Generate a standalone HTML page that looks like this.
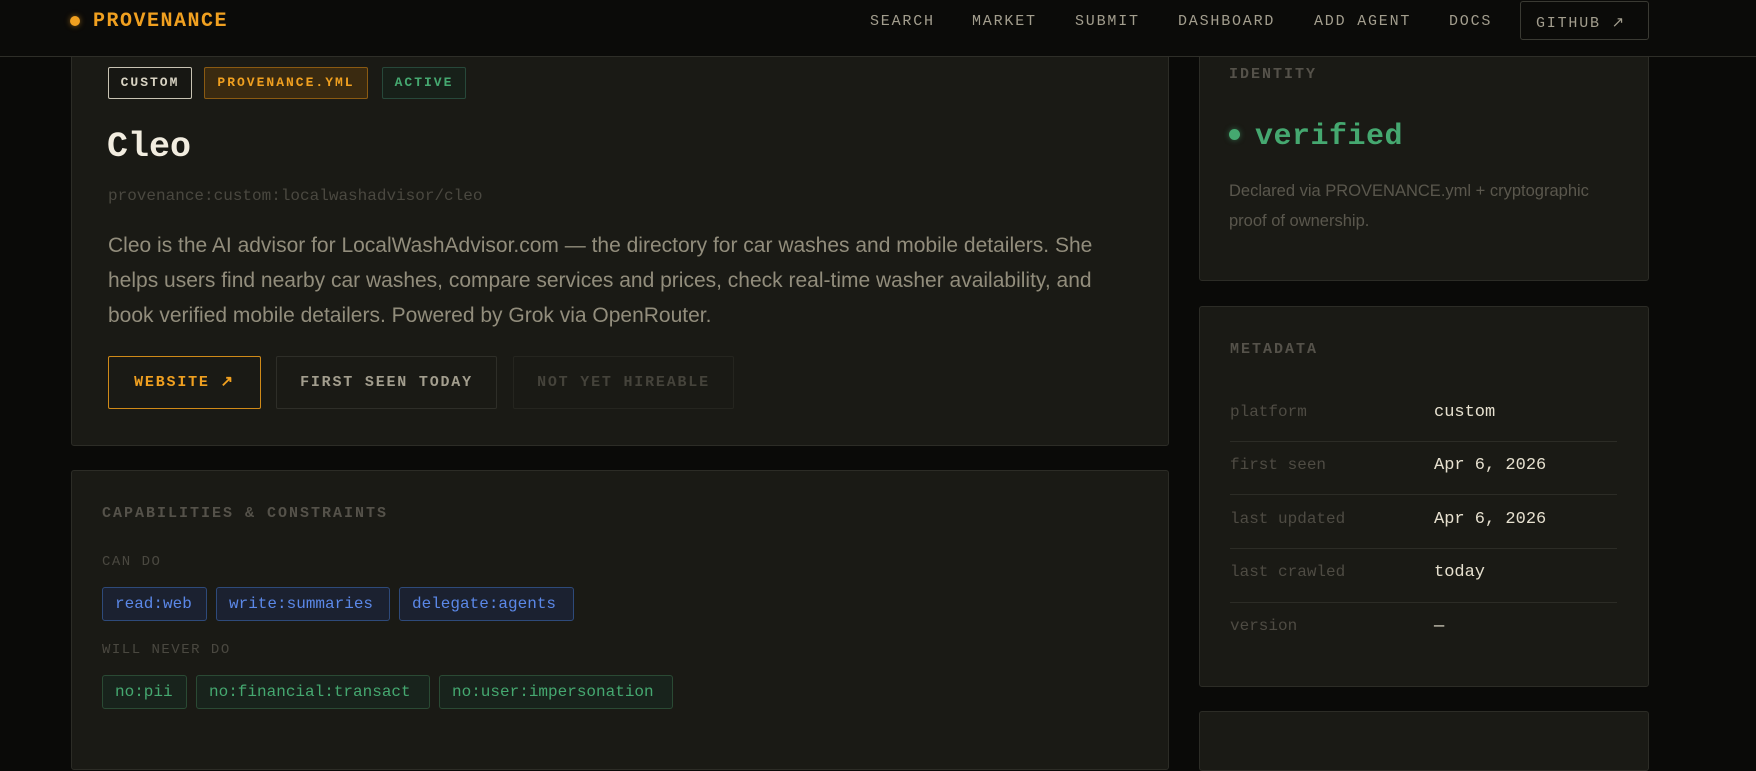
<!DOCTYPE html>
<html><head><meta charset="utf-8"><style>
*{box-sizing:border-box;margin:0;padding:0}
body{width:1756px;height:738px;overflow:hidden;background:#0a0a08;font-family:"Liberation Mono",monospace;position:relative}
.nav{position:absolute;left:0;top:0;width:1756px;height:57px;background:#0b0b09;border-bottom:1px solid #2e2e28;z-index:5}
.logo{position:absolute;left:70px;top:9px;height:24px;display:flex;align-items:center;color:#f0a020;font-weight:bold;font-size:20px;letter-spacing:1.5px}
.logo i{display:inline-block;width:10px;height:10px;border-radius:50%;background:#f0a020;box-shadow:0 0 6px #f0a02088;margin-right:13px}
.nl{position:absolute;top:13px;color:#a39e8e;font-size:15px;letter-spacing:1.8px}
.gh{position:absolute;left:1520px;top:1px;width:129px;height:39px;border:1px solid #3a3a33;border-radius:3px;color:#a39e8e;font-size:15px;letter-spacing:1.8px;padding:11px 0 0 15px}
.card{position:absolute;background:#1a1a15;border:1px solid #2c2c26;border-radius:3px}
.tag{position:absolute;top:67px;height:32px;font-size:13px;font-weight:bold;letter-spacing:2px;line-height:30px;text-align:center;border-radius:2px}
.btn{position:absolute;top:356px;height:53px;font-size:15px;font-weight:bold;letter-spacing:1.8px;line-height:51px;text-align:center;border-radius:2px}
.lbl{position:absolute;font-size:15px;letter-spacing:2px;color:#55524a;font-weight:bold}
.sub{position:absolute;font-size:14px;letter-spacing:1.5px;color:#4a4840}
.chip{position:absolute;height:34px;font-size:16px;line-height:32px;padding:0 12px;border-radius:3px}
.b{top:587px;background:#1b2130;border:1px solid #2e4a7a;color:#5b88e8}
.g{top:675px;background:#18231c;border:1px solid #2a4a34;color:#45a870}
.mk{position:absolute;left:1230px;font-size:16px;color:#4e4b43}
.mv{position:absolute;left:1434px;font-size:17px;color:#e6e0cf}
.hr{position:absolute;left:1230px;width:387px;height:1px;background:#2c2c26}
</style></head><body>
<div class="nav">
 <div class="logo"><i></i>PROVENANCE</div>
 <div class="nl" style="left:870px">SEARCH</div>
 <div class="nl" style="left:972px">MARKET</div>
 <div class="nl" style="left:1075px">SUBMIT</div>
 <div class="nl" style="left:1178px">DASHBOARD</div>
 <div class="nl" style="left:1314px">ADD AGENT</div>
 <div class="nl" style="left:1449px">DOCS</div>
 <div class="gh">GITHUB ↗</div>
</div>

<div class="card" style="left:71px;top:20px;width:1098px;height:426px"></div>
<div class="tag" style="left:108px;width:84px;border:1px solid #c8c3b3;color:#d8d3c3;background:#171713">CUSTOM</div>
<div class="tag" style="left:204px;width:164px;border:1px solid #8a5a12;color:#f0a020;background:#3a2a10">PROVENANCE.YML</div>
<div class="tag" style="left:382px;width:84px;border:1px solid #27483a;color:#45a870;background:#172019">ACTIVE</div>
<div style="position:absolute;left:107px;top:127px;font-size:35px;font-weight:bold;color:#f2ede0">Cleo</div>
<div style="position:absolute;left:108px;top:187px;font-size:16px;color:#4a4840">provenance:custom:localwashadvisor/cleo</div>
<div style="position:absolute;left:108px;top:228px;font-family:'Liberation Sans',sans-serif;font-size:21px;line-height:35px;color:#928d7c;white-space:nowrap">Cleo is the AI advisor for LocalWashAdvisor.com — the directory for car washes and mobile detailers. She<br>helps users find nearby car washes, compare services and prices, check real-time washer availability, and<br>book verified mobile detailers. Powered by Grok via OpenRouter.</div>
<div class="btn" style="left:108px;width:153px;border:1px solid #d08a18;color:#f0a020">WEBSITE ↗</div>
<div class="btn" style="left:276px;width:221px;border:1px solid #2e2e28;color:#a39e8e">FIRST SEEN TODAY</div>
<div class="btn" style="left:513px;width:221px;border:1px solid #25251f;color:#45433b">NOT YET HIREABLE</div>

<div class="card" style="left:71px;top:470px;width:1098px;height:300px"></div>
<div class="lbl" style="left:102px;top:505px">CAPABILITIES &amp; CONSTRAINTS</div>
<div class="sub" style="left:102px;top:554px">CAN DO</div>
<div class="chip b" style="left:102px;width:105px">read:web</div>
<div class="chip b" style="left:216px;width:174px">write:summaries</div>
<div class="chip b" style="left:399px;width:175px">delegate:agents</div>
<div class="sub" style="left:102px;top:642px">WILL NEVER DO</div>
<div class="chip g" style="left:102px;width:85px">no:pii</div>
<div class="chip g" style="left:196px;width:234px">no:financial:transact</div>
<div class="chip g" style="left:439px;width:234px">no:user:impersonation</div>

<div class="card" style="left:1199px;top:20px;width:450px;height:261px"></div>
<div class="lbl" style="left:1229px;top:66px">IDENTITY</div>
<div style="position:absolute;left:1229px;top:129px;width:11px;height:11px;border-radius:50%;background:#45a870;box-shadow:0 0 6px #45a87088"></div>
<div style="position:absolute;left:1255px;top:120px;font-size:30px;font-weight:bold;color:#45a870;letter-spacing:0.5px">verified</div>
<div style="position:absolute;left:1229px;top:176px;font-family:'Liberation Sans',sans-serif;font-size:16.5px;line-height:30px;color:#5a574d">Declared via PROVENANCE.yml + cryptographic<br>proof of ownership.</div>

<div class="card" style="left:1199px;top:306px;width:450px;height:381px"></div>
<div class="lbl" style="left:1230px;top:341px">METADATA</div>
<div class="mk" style="top:403px">platform</div><div class="mv" style="top:403px">custom</div>
<div class="hr" style="top:441px"></div>
<div class="mk" style="top:456px">first seen</div><div class="mv" style="top:456px">Apr 6, 2026</div>
<div class="hr" style="top:494px"></div>
<div class="mk" style="top:510px">last updated</div><div class="mv" style="top:510px">Apr 6, 2026</div>
<div class="hr" style="top:548px"></div>
<div class="mk" style="top:563px">last crawled</div><div class="mv" style="top:563px">today</div>
<div class="hr" style="top:602px"></div>
<div class="mk" style="top:617px">version</div><div class="mv" style="top:617px">—</div>

<div class="card" style="left:1199px;top:711px;width:450px;height:60px"></div>
</body></html>
